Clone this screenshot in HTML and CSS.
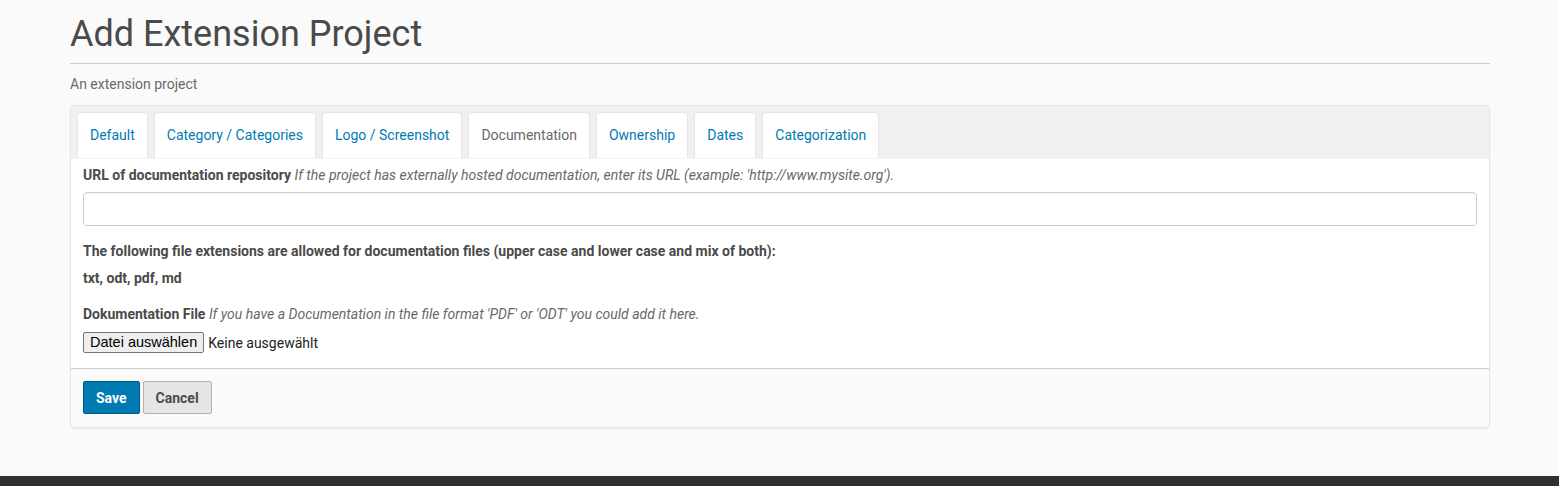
FILE: index.html
```html
<!DOCTYPE html>
<html lang="de">
<head>
<meta charset="utf-8">
<title>Add Extension Project</title>
<link rel="stylesheet" href="styles.css">
</head>
<body>
<main class="page">
  <h1 class="title">Add Extension Project</h1>
  <hr class="rule">
  <p class="desc">An extension project</p>
  <form class="panel">
    <nav class="tabs">
      <a class="tab">Default</a>
      <a class="tab">Category / Categories</a>
      <a class="tab">Logo / Screenshot</a>
      <a class="tab active">Documentation</a>
      <a class="tab">Ownership</a>
      <a class="tab">Dates</a>
      <a class="tab">Categorization</a>
    </nav>
    <section class="content">
      <div class="field">
        <label class="label">URL of documentation repository</label>
        <span class="help">If the project has externally hosted documentation, enter its URL (example: 'http://www.mysite.org').</span>
        <div class="input"></div>
      </div>
      <p class="strong-line">The following file extensions are allowed for documentation files (upper case and lower case and mix of both):</p>
      <p class="strong-line ext">txt, odt, pdf, md</p>
      <div class="field file-field">
        <label class="label">Dokumentation File</label>
        <span class="help">If you have a Documentation in the file format 'PDF' or 'ODT' you could add it here.</span>
        <div class="file">
          <span class="file-btn">Datei auswählen</span>
          <span class="file-name">Keine ausgewählt</span>
        </div>
      </div>
    </section>
    <footer class="actions">
      <span class="btn save">Save</span>
      <span class="btn cancel">Cancel</span>
    </footer>
  </form>
</main>
<div class="site-footer"></div>
</body>
</html>
```

FILE: styles.css
```css
html, body {
  margin: 0;
  padding: 0;
  background: #fafafa;
  font-family: Roboto, "Noto Sans", sans-serif;
  color: #4a4a4a;
  font-size: 14px;
  line-height: 20px;
}
.page {
  width: 1420px;
  margin: 0 0 0 70px;
  padding-top: 13px;
  padding-bottom: 48px;
}
.title {
  margin: 0;
  font-size: 36px;
  line-height: 42px;
  font-weight: 400;
  color: #4a4a4a;
}
.rule {
  margin: 8px 0 0;
  border: 0;
  border-top: 1px solid #cccccc;
  height: 0;
}
.desc {
  margin: 10px 0 0;
  color: #696969;
  font-size: 14px;
}
.panel {
  margin-top: 11px;
  border: 1px solid #e5e5e5;
  border-radius: 4px;
  background: #fafafa;
  box-shadow: 0 1px 2px rgba(0,0,0,0.05);
  overflow: hidden;
}
.tabs {
  display: flex;
  gap: 6px;
  padding: 6px 6px 0;
  background: #f0f0f0;
}
.tab {
  display: block;
  padding: 12px 12px 13px;
  background: #ffffff;
  border: 1px solid #e5e5e5;
  border-bottom: 0;
  border-radius: 4px 4px 0 0;
  color: #007bb1;
  font-size: 14px;
  line-height: 20px;
}
.tab.active {
  color: #696969;
}
.content {
  background: #ffffff;
  padding: 6px 12px 15px;
  border-top: 1px solid #f4f4f4;
  border-bottom: 1px solid #cccccc;
}
.label, .help, .strong-line {
  font-stretch: 96%;
}
.label {
  font-weight: 700;
  color: #4a4a4a;
}
.help {
  font-style: italic;
  color: #696969;
}
.input {
  margin-top: 7px;
  height: 32px;
  border: 1px solid #cccccc;
  border-radius: 4px;
  background: #fff;
  box-shadow: inset 0 1px 2px rgba(0,0,0,0.05);
}
.strong-line {
  margin: 15px 0 0;
  font-weight: 700;
}
.strong-line.ext {
  margin-top: 7px;
}
.file-field {
  margin-top: 16px;
}
.file {
  margin-top: 8px;
  display: flex;
  align-items: center;
  gap: 4px;
}
.file-btn {
  font-family: "Liberation Sans", Arial, sans-serif;
  font-size: 14.5px;
  line-height: 15px;
  color: #000;
  background: #efefef;
  border: 1px solid #767676;
  border-radius: 2px;
  padding: 2px 6px 2px;
}
.file-name {
  color: #222;
  font-stretch: 98%;
}
.actions {
  padding: 12px 12px 13px;
  display: flex;
  gap: 3px;
}
.btn {
  display: block;
  height: 29px;
  line-height: 29px;
  padding: 2px 12px 0;
  border: 1px solid;
  border-radius: 2px;
  font-weight: 700;
  font-size: 14px;
  font-stretch: 96%;
}
.save {
  background: #007bb1;
  border-color: #00587f;
  color: #ffffff;
}
.cancel {
  background: #e5e5e5;
  border-color: #b3b3b3;
  color: #4a4a4a;
}
.site-footer {
  height: 10px;
  background: #2e3133;
}
```
